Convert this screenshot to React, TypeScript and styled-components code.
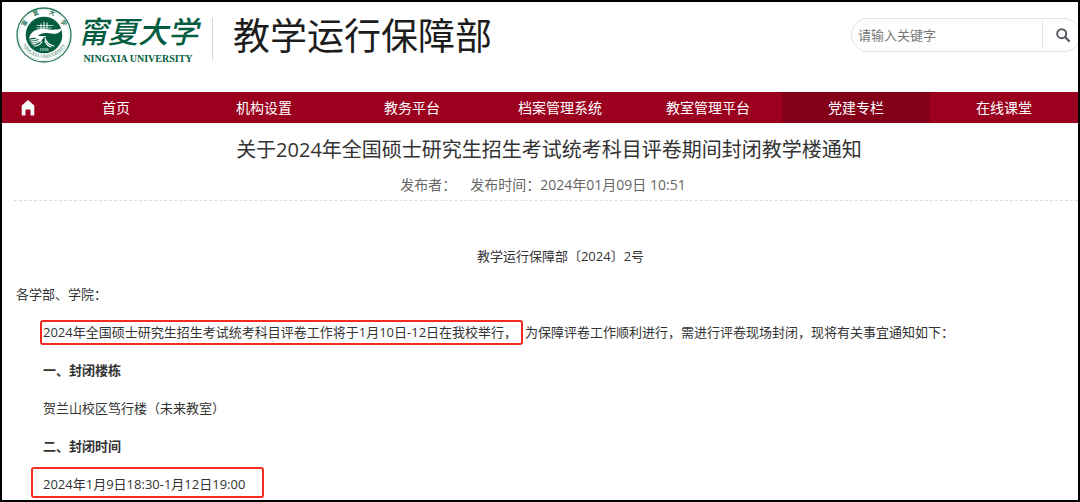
import React from "react";
import styled, { createGlobalStyle } from "styled-components";

const GlobalStyle = createGlobalStyle`
  * { box-sizing: border-box; }
  body {
    margin: 0;
    background: #fff;
    color: #333;
    font-family: "Open Sans", "Noto Sans CJK SC", sans-serif;
    font-size: 13px;
  }
  h1, h2, h3, p, ul { margin: 0; padding: 0; }
`;

const Page = styled.div`
  min-height: 100vh;
  border: 2px solid #000;
  overflow: hidden;
`;

const Header = styled.header`
  display: flex;
  justify-content: space-between;
  height: 90px;
  padding-left: 14px;
`;

const Brand = styled.div`
  display: flex;
  align-items: flex-start;
`;

const Emblem = styled.svg`
  width: 56px;
  height: 56px;
  margin-top: 5px;
`;

const SchoolName = styled.div`
  display: flex;
  flex-direction: column;
  align-items: center;
  width: 124px;
  margin: 7px 4px 0;
  color: #045d41;
`;

const SchoolNameCn = styled.span`
  font-family: "Noto Sans CJK SC", sans-serif;
  font-size: 30px;
  font-style: italic;
  font-weight: 500;
  line-height: 42px;
  white-space: nowrap;
`;

const SchoolNameEn = styled.span`
  font-family: "Liberation Serif", serif;
  font-size: 10px;
  font-weight: 700;
  line-height: 16px;
  white-space: nowrap;
`;

const Divider = styled.span`
  width: 1px;
  height: 43px;
  margin: 16px 20px 0 8px;
  background: #d8d8d8;
`;

const Department = styled.h1`
  color: #1c1c1c;
  font-family: "Noto Sans CJK SC", sans-serif;
  font-size: 37px;
  font-weight: 400;
  line-height: 64px;
  white-space: nowrap;
`;

const Search = styled.form`
  display: flex;
  align-items: center;
  flex: none;
  width: 230px;
  height: 34px;
  margin: 16px -3px 0 0;
  border: 1px solid #e3e3e6;
  border-radius: 17px;
`;

const SearchInput = styled.input`
  flex: 1;
  min-width: 0;
  height: 28px;
  padding: 0 6px;
  border: 0;
  border-right: 1px solid #e3e3e6;
  background: none;
  color: #555;
  font: inherit;
  &::placeholder { color: #777; }
`;

const SearchButton = styled.button`
  display: flex;
  align-items: center;
  justify-content: center;
  width: 37px;
  height: 28px;
  padding: 0 0 0 3px;
  border: 0;
  background: none;
`;

const Nav = styled.nav`
  display: flex;
  height: 31px;
  background: #9b001e;
`;

const HomeLink = styled.a`
  display: flex;
  align-items: center;
  justify-content: center;
  width: 40px;
  padding-left: 11px;
`;

const NavList = styled.ul`
  display: flex;
  flex: 1;
  list-style: none;
`;

const NavItem = styled.li`
  flex: 1;
`;

const NavLink = styled.a<{ $active?: boolean }>`
  display: block;
  background: ${({ $active }) => ($active ? "#840019" : "transparent")};
  color: #fff;
  font-size: 14px;
  line-height: 31px;
  text-align: center;
  text-decoration: none;
`;

const Article = styled.article`
  margin-left: 12px;
`;

const ArticleHead = styled.header`
  padding-left: 6px;
  border-bottom: 1px dashed #dedede;
  text-align: center;
`;

const Title = styled.h2`
  padding-top: 12px;
  font-size: 20px;
  font-weight: 400;
  line-height: 30px;
`;

const Meta = styled.p`
  display: flex;
  justify-content: center;
  gap: 14px;
  padding: 9px 12px 4px 0;
  color: #666;
  font-size: 14px;
  line-height: 22px;
`;

const Body = styled.div`
  display: flex;
  flex-direction: column;
  gap: 16px;
  padding: 44px 0 5px 2px;
  line-height: 22px;
`;

const Paragraph = styled.p<{ $indent?: boolean; $center?: boolean }>`
  padding-left: ${({ $indent }) => ($indent ? "27px" : "0")};
  text-align: ${({ $center }) => ($center ? "center" : "left")};
`;

const Subheading = styled.h3`
  padding-left: 27px;
  font-size: 13px;
  font-weight: 700;
  line-height: 22px;
`;

const Outlined = styled.span<{ $wide?: boolean }>`
  position: relative;
  margin-right: 8px;
  &::after {
    content: "";
    position: absolute;
    inset: ${({ $wide }) => ($wide ? "-8px -19px -5px -12px" : "-3px -6px -4px -3px")};
    border: 2px solid #f52a20;
    border-radius: 3px;
    pointer-events: none;
  }
`;

const navItems = ["首页", "机构设置", "教务平台", "档案管理系统", "教室管理平台", "党建专栏", "在线课堂"];

const emblemCharacters = [
  { char: "甯", offset: "10%" },
  { char: "夏", offset: "36%" },
  { char: "大", offset: "64%" },
  { char: "学", offset: "90%" },
];

function UniversityEmblem() {
  return (
    <Emblem viewBox="0 0 56 56" role="img" aria-label="宁夏大学校徽">
      <defs>
        <path id="ring-top" d="M8.500 22 A20 20 0 0 1 47.500 22" />
        <path id="ring-bottom" d="M3.800 29 A24.300 24.300 0 0 0 52.200 29" />
      </defs>
      <circle cx="28" cy="28" r="27" fill="#fff" stroke="#2b7960" strokeWidth="1.3" />
      <circle cx="28" cy="28" r="25.3" fill="none" stroke="#b9d3ca" strokeWidth=".5" />
      <circle cx="28" cy="28" r="18.3" fill="#045d41" />
      <g fill="none" stroke="#fff" strokeLinecap="round">
        <path d="M25 17v5M28 15.500v6M31 16v5" strokeWidth="1" />
        <path d="M21 18.500h16M21 21h14" strokeWidth=".7" />
        <path d="M29 31c1 4 5 7 9 8M25 33c-3 3-6 4-9 4M26 31c-3 3-7 4-11 4M24 30c-2 2-6 3-10 3M29 34c1 3 3 5 6 6M26 35c-2 3-5 4-8 4" strokeWidth="1.1" />
      </g>
      <path d="M13 32C14 24 22 20.500 30 22C35 23 40 23 46 21.500C45 25.500 41 27.500 35 26.500C28 25.500 25 26 22 29L31 29C27 30 26 33 24 36L23 32C19 31 16 30 13 32Z" fill="#fff" />
      <g fill="#2b7960" textAnchor="middle">
        {emblemCharacters.map(({ char, offset }) => (
          <text key={char} fontFamily="Noto Sans CJK SC, sans-serif" fontSize="6" fontWeight="700">
            <textPath href="#ring-top" startOffset={offset}>{char}</textPath>
          </text>
        ))}
        <text fontFamily="Liberation Serif, serif" fontSize="5">
          <textPath href="#ring-bottom" startOffset="50%">NINGXIA UNIVERSITY</textPath>
        </text>
        <text x="28" y="44" fill="#fff" fontFamily="Liberation Sans, sans-serif" fontSize="4">1958</text>
      </g>
    </Emblem>
  );
}

export default function App() {
  return (
    <>
      <GlobalStyle />
      <Page>
        <Header>
          <Brand>
            <UniversityEmblem />
            <SchoolName>
              <SchoolNameCn>甯夏大学</SchoolNameCn>
              <SchoolNameEn>NINGXIA UNIVERSITY</SchoolNameEn>
            </SchoolName>
            <Divider />
            <Department>教学运行保障部</Department>
          </Brand>
          <Search role="search" onSubmit={(e) => e.preventDefault()}>
            <SearchInput type="text" aria-label="请输入关键字" placeholder="请输入关键字" />
            <SearchButton type="submit" aria-label="搜索">
              <svg width="14" height="14" viewBox="0 0 14 14" fill="none" stroke="#5b5b66">
                <circle cx="5.700" cy="5.700" r="4.500" strokeWidth="2" />
                <path d="M9 9l4 4" strokeWidth="2.400" strokeLinecap="round" />
              </svg>
            </SearchButton>
          </Search>
        </Header>

        <Nav>
          <HomeLink href="#" aria-label="主页">
            <svg width="14" height="16" viewBox="0 0 14 16" fill="#f6f6f6">
              <path d="M7 0L13.300 5.500V14.500Q13.300 15.500 12.300 15.500H9.500V10.500Q9.500 9.500 8.500 9.500H5.500Q4.500 9.500 4.500 10.500V15.500H1.700Q.7 15.500 .7 14.500V5.500Z" />
            </svg>
          </HomeLink>
          <NavList>
            {navItems.map((label) => (
              <NavItem key={label}>
                <NavLink href="#" $active={label === "党建专栏"}>{label}</NavLink>
              </NavItem>
            ))}
          </NavList>
        </Nav>

        <Article>
          <ArticleHead>
            <Title>关于2024年全国硕士研究生招生考试统考科目评卷期间封闭教学楼通知</Title>
            <Meta>
              <span>发布者：</span>
              <span>发布时间：2024年01月09日 10:51</span>
            </Meta>
          </ArticleHead>
          <Body>
            <Paragraph $indent $center>教学运行保障部〔2024〕2号</Paragraph>
            <Paragraph>各学部、学院：</Paragraph>
            <Paragraph $indent>
              <Outlined>2024年全国硕士研究生招生考试统考科目评卷工作将于1月10日-12日在我校举行，</Outlined>
              为保障评卷工作顺利进行，需进行评卷现场封闭，现将有关事宜通知如下：
            </Paragraph>
            <Subheading>一、封闭楼栋</Subheading>
            <Paragraph $indent>贺兰山校区笃行楼（未来教室）</Paragraph>
            <Subheading>二、封闭时间</Subheading>
            <Paragraph $indent>
              <Outlined $wide>2024年1月9日18:30-1月12日19:00</Outlined>
            </Paragraph>
          </Body>
        </Article>
      </Page>
    </>
  );
}
